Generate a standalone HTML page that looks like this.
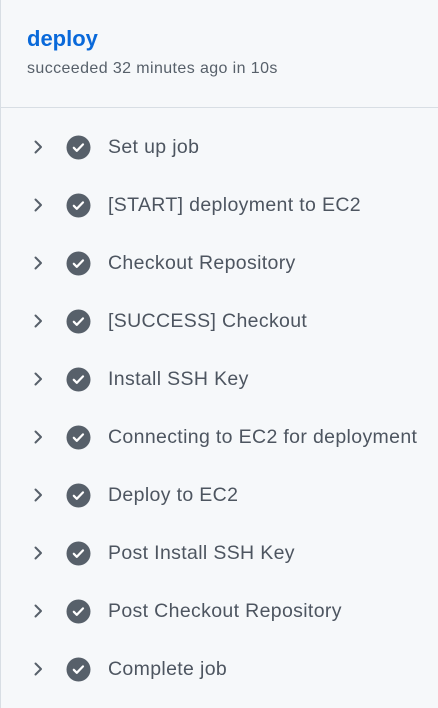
<!DOCTYPE html>
<html><head><style>
body{margin:0;width:438px;height:708px;background:#f6f8fa;font-family:"Liberation Sans",sans-serif;overflow:hidden;position:relative}
.lb{position:absolute;left:0;top:0;bottom:0;width:1px;background:#d8dee4}
h1{position:absolute;left:27px;top:26px;margin:0;font-size:22px;font-weight:bold;color:#0969da}
.sub{position:absolute;left:27px;top:60px;font-size:16px;letter-spacing:0.4px;color:#57606a}
.hr{position:absolute;left:0;right:0;top:107px;height:1px;background:#d8dee4}
.row{position:absolute;left:0;height:58px;width:438px}
.row svg{position:absolute}
.row span{position:absolute;left:108px;top:18px;font-size:19.5px;letter-spacing:0.35px;color:#4d5560;white-space:nowrap}
</style></head><body>
<div class="lb"></div>
<h1>deploy</h1>
<div class="sub">succeeded 32 minutes ago in 10s</div>
<div class="hr"></div>
<div id="rows"></div>
<script>
const t=["Set up job","[START] deployment to EC2","Checkout Repository","[SUCCESS] Checkout","Install SSH Key","Connecting to EC2 for deployment","Deploy to EC2","Post Install SSH Key","Post Checkout Repository","Complete job"];
let h="";
t.forEach((s,i)=>{const y=118+i*58;
h+=`<div class="row" style="top:${y}px"><svg style="left:30px;top:20px" width="16" height="18" viewBox="0 0 16 18"><path d="M5.5 3.5l5.5 5.5-5.5 5.5" fill="none" stroke="#57606a" stroke-width="2" stroke-linecap="round" stroke-linejoin="round"/></svg><svg style="left:66px;top:17px" width="25" height="25" viewBox="0 0 25 25"><circle cx="12.5" cy="12.5" r="12" fill="#57606a"/><path d="M7.8 12.8l3 3 6.2-6.4" fill="none" stroke="#fff" stroke-width="2.2" stroke-linecap="round" stroke-linejoin="round"/></svg><span>${s}</span></div>`});
document.getElementById("rows").innerHTML=h;
</script>
</body></html>
